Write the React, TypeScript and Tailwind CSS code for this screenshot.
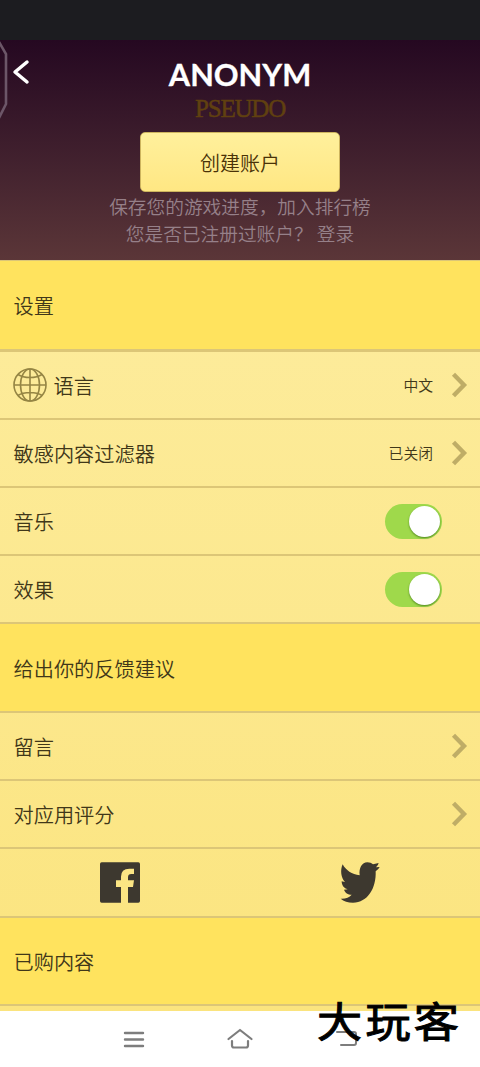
import type { ReactNode } from 'react';

function Chevron() {
  return (
    <svg className="ml-[17px] mr-[12px] shrink-0" width="18" height="26" viewBox="0 0 18 26" fill="none" stroke="#bfad66" strokeWidth="4.4">
      <path d="M3.5 2.2 14 13 3.5 23.8" />
    </svg>
  );
}

function Toggle() {
  return (
    <button className="mr-[38px] flex h-[35px] w-[57px] items-center justify-end rounded-full bg-[#9fd94b] pr-[2px]">
      <span className="h-[31px] w-[31px] rounded-full bg-white shadow-[0_1px_2px_rgba(30,80,0,0.6)]" />
    </button>
  );
}

function Row({ label, icon, children }: { label: string; icon?: ReactNode; children: ReactNode }) {
  return (
    <div className="flex h-[68.2px] shrink-0 items-center border-b-2 border-[#dcc677] pl-[13.5px]">
      {icon}
      <span className="flex-1 pt-[2px] text-[20.2px] leading-none">{label}</span>
      {children}
    </div>
  );
}

function Section({ title }: { title: string }) {
  return (
    <div className="flex h-[88.5px] shrink-0 items-center border-b-2 border-[#dcc677] bg-[#ffe35e] pl-[13.5px]">
      <h2 className="pt-[3px] text-[20.2px] leading-none">{title}</h2>
    </div>
  );
}

function Globe() {
  return (
    <svg className="-ml-px mr-[7px]" width="34" height="34" viewBox="0 0 34 34" fill="none" stroke="#958544" strokeWidth="1.6">
      <circle cx="17" cy="17" r="16" />
      <ellipse cx="17" cy="17" rx="9.5" ry="16" />
      <path d="M17 1v32M1 17h32M5 6.5c6 4 18 4 24 0M5 27.5c6-4 18-4 24 0" />
    </svg>
  );
}

export default function App() {
  return (
    <div className="relative flex h-[1067px] w-[480px] flex-col overflow-hidden bg-white font-['Noto_Sans_CJK_SC',sans-serif] font-[350] text-[#403719]">
      <div className="h-[40px] shrink-0 bg-[#1c1c20]" />

      {/* Account header */}
      <header className="relative flex h-[220px] shrink-0 flex-col items-center bg-linear-to-b from-[#250821] to-[#5b3638]">
        {/* Edge handle */}
        <svg className="absolute left-0 top-0" width="10" height="80" viewBox="0 0 10 80" fill="none" stroke="#6c5668" strokeWidth="2.6">
          <path d="M-1 2 6 14v50l-7 14" />
        </svg>
        <svg className="absolute left-[12px] top-[19px]" width="18" height="27" viewBox="0 0 18 27" fill="none" stroke="#fff" strokeWidth="3.5" strokeLinecap="round" strokeLinejoin="round">
          <path d="M15 3 3 13 15 23" />
        </svg>
        <h1 className="mt-[18px] font-['Lato',sans-serif] text-[30.7px] font-bold leading-[34px] text-white [-webkit-text-stroke:0.3px_white]">ANONYM</h1>
        <p className="mt-[4px] font-['Liberation_Serif',serif] text-[25px] leading-[26px] tracking-[-1.2px] text-[#604010] [-webkit-text-stroke:0.5px_#604010]">PSEUDO</p>
        <button className="mt-[10px] flex h-[60px] w-[200px] shrink-0 items-center justify-center rounded-[5px] border border-[#cdb45e] bg-linear-to-b from-[#fff09c] to-[#ffe783] pt-[2px] text-[20px] leading-none text-[#4a3207]">
          创建账户
        </button>
        <p className="whitespace-pre text-center text-[18.7px] leading-[27px] text-[#968089]">
          保存您的游戏进度，加入排行榜{'\n'}您是否已注册过账户？ 登录
        </p>
      </header>

      {/* Settings list */}
      <main className="flex h-[751px] shrink-0 flex-col overflow-hidden border-t border-[#dcc677] bg-linear-to-b from-[#fdec9d] to-[#fbe47e]">
        <div className="flex h-[90.7px] shrink-0 items-center border-b-[3px] border-[#dcc677] bg-[#ffe35e] pl-[13.5px]">
          <h2 className="pt-[2px] text-[20.2px] leading-none">设置</h2>
        </div>
        <Row label="语言" icon={<Globe />}>
          <span className="pt-px text-[14.8px] leading-none">中文</span>
          <Chevron />
        </Row>
        <Row label="敏感内容过滤器">
          <span className="pt-px text-[14.8px] leading-none">已关闭</span>
          <Chevron />
        </Row>
        <Row label="音乐">
          <Toggle />
        </Row>
        <Row label="效果">
          <Toggle />
        </Row>
        <Section title="给出你的反馈建议" />
        <Row label="留言">
          <Chevron />
        </Row>
        <Row label="对应用评分">
          <Chevron />
        </Row>
        <div className="grid h-[68.2px] shrink-0 grid-cols-2 place-items-center border-b-2 border-[#dcc677]">
          <svg width="40" height="41" viewBox="0 0 120 121" fill="#3d382f">
            <path d="M5 0H115q5 0 5 5V116q0 5-5 5H84V74H99L102 54H84V45Q84 35 94 35H102V19H88Q63 19 63 43V54H48V74H63V121H5q-5 0-5-5V5q0-5 5-5z" />
          </svg>
          <svg width="40" height="41" viewBox="780 66 120 123" fill="#3d382f">
            <path d="M788 73C797 91 816 103 839 106C836 84 846 67 862 67C869 67 875 69 879 73L896 69Q894 77 888 82L899 81Q895 89 887 94C889 145 863 188 819 188C804 188 791 184 782 176C796 177 808 172 815 164C804 164 795 158 792 149L803 148C792 145 785 136 785 124L795 126C783 113 780 91 788 73Z" />
          </svg>
        </div>
        <Section title="已购内容" />
      </main>

      {/* System navigation */}
      <nav className="grid h-[56px] shrink-0 grid-cols-[80px_107px_106px_108px_79px] items-center bg-white text-[#7d7d7d]">
        <svg className="col-start-2 justify-self-center" width="24" height="22" viewBox="0 0 24 22" fill="none" stroke="currentColor" strokeWidth="2.4" strokeLinecap="round">
          <path d="M3 5h18M3 11.5h18M3 18h18" />
        </svg>
        <svg className="justify-self-center" width="28" height="24" viewBox="0 0 28 24" fill="none" stroke="currentColor" strokeWidth="2.2" strokeLinecap="round" strokeLinejoin="round">
          <path d="M2.5 12 14 3l11.5 9M6 14v4.5q0 2 2 2h12q2 0 2-2V14" />
        </svg>
        <svg className="justify-self-center" width="26" height="20" viewBox="0 0 26 20" fill="none" stroke="currentColor" strokeWidth="2" strokeLinecap="round">
          <path d="M3 3h17q2 0 2 2v9q0 2-2 2H7" />
        </svg>
      </nav>

      {/* Site mark */}
      <div className="absolute left-[317px] top-[994px] origin-left scale-x-110 whitespace-nowrap text-[41px] font-normal leading-[50px] tracking-[3px] text-black [-webkit-text-stroke:1px_black]">
        大玩客
      </div>
    </div>
  );
}
